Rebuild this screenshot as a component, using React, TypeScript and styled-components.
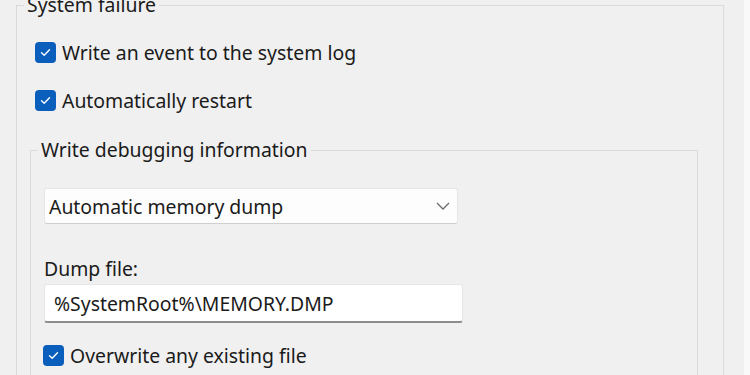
import React from "react";
import styled, { createGlobalStyle } from "styled-components";

const GlobalStyle = createGlobalStyle`
  html, body {
    margin: 0;
    padding: 0;
    background: #f9f9f9;
    overflow: hidden;
  }
  body {
    font-family: "Noto Sans", "Liberation Sans", sans-serif;
    color: #1b1b1b;
  }
`;

const Page = styled.div`
  width: 744px;
  height: 375px;
  background: #f0f0f0;
  overflow: hidden;
  padding-left: 16px;
  box-sizing: border-box;
`;

const Group = styled.fieldset<{ $inner?: boolean }>`
  margin: ${(p) => (p.$inner ? "24px 0 0 0" : "-7px 0 0 0")};
  width: ${(p) => (p.$inner ? "668px" : "708px")};
  box-sizing: border-box;
  padding: 0 0 40px 13px;
  border: 1px solid #dadada;
  border-radius: 0;
  min-width: 0;
`;

const Legend = styled.legend`
  margin-left: -6px;
  padding: 0 3px;
  font-size: 19.4px;
  line-height: 24px;
  height: 24px;
`;

const CheckRow = styled.label<{ $top: number; $indent?: number }>`
  display: flex;
  align-items: center;
  gap: 6px;
  height: 28px;
  margin-top: ${(p) => p.$top}px;
  margin-left: ${(p) => p.$indent ?? 5}px;
  font-size: 19.4px;
`;

const Box = styled.span`
  width: 21px;
  height: 21px;
  border-radius: 4px;
  background: #0a5fbd;
  display: flex;
  align-items: center;
  justify-content: center;
  flex-shrink: 0;
`;

const Select = styled.div`
  margin-top: 26px;
  width: 414px;
  height: 36px;
  box-sizing: border-box;
  background: #fdfdfd;
  border: 1px solid #e6e6e6;
  border-bottom-color: #cfcfcf;
  border-radius: 3px;
  display: flex;
  align-items: center;
  justify-content: space-between;
  padding: 0 6px 0 4px;
  font-size: 19.4px;
`;

const FieldLabel = styled.div`
  margin-top: 33px;
  height: 24px;
  line-height: 24px;
  font-size: 19.4px;
`;

const Input = styled.div`
  margin-top: 3px;
  width: 419px;
  height: 39px;
  box-sizing: border-box;
  background: #ffffff;
  border: 1px solid #e6e6e6;
  border-bottom: 2px solid #8c8c8c;
  border-radius: 3px;
  display: flex;
  align-items: center;
  padding: 0 9px;
  font-size: 19.4px;
`;

const Check = () => (
  <Box>
    <svg width="13" height="13" viewBox="0 0 13 13">
      <path
        d="M2.5 6.8 L5.2 9.3 L10.5 3.8"
        fill="none"
        stroke="#fff"
        strokeWidth="1.4"
        strokeLinecap="round"
        strokeLinejoin="round"
      />
    </svg>
  </Box>
);

const Chevron = () => (
  <svg width="16" height="10" viewBox="0 0 16 10">
    <path d="M2 2 L8 8 L14 2" fill="none" stroke="#6a6a6a" strokeWidth="1.3" />
  </svg>
);

export default function App() {
  return (
    <Page>
      <GlobalStyle />
      <Group>
        <Legend>System failure</Legend>
        <CheckRow $top={21}>
          <Check />
          Write an event to the system log
        </CheckRow>
        <CheckRow $top={20}>
          <Check />
          Automatically restart
        </CheckRow>
        <Group $inner>
          <Legend>Write debugging information</Legend>
          <Select>
            Automatic memory dump
            <Chevron />
          </Select>
          <FieldLabel>Dump file:</FieldLabel>
          <Input>%SystemRoot%\MEMORY.DMP</Input>
          <CheckRow $top={18} $indent={-1}>
            <Check />
            Overwrite any existing file
          </CheckRow>
        </Group>
      </Group>
    </Page>
  );
}
